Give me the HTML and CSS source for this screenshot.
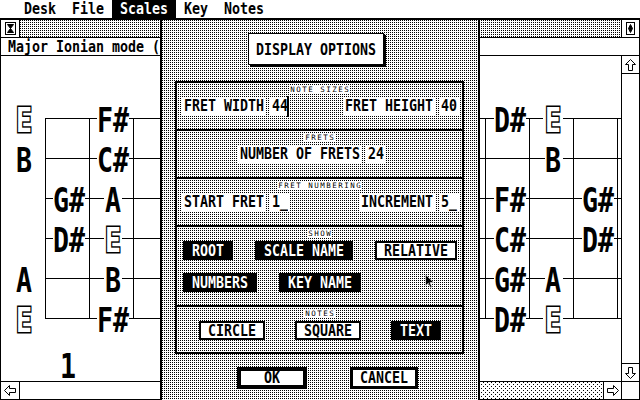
FILE: index.html
```html
<!DOCTYPE html>
<html>
<head>
<meta charset="utf-8">
<title>Display Options</title>
<link rel="stylesheet" href="styles.css">
</head>
<body>
<div class="screen">
  <div class="menubar">
    <div class="mi"><span class="t">Desk</span></div>
    <div class="mi"><span class="t">File</span></div>
    <div class="mi on"><span class="t">Scales</span></div>
    <div class="mi"><span class="t">Key</span></div>
    <div class="mi"><span class="t">Notes</span></div>
  </div>

  <section class="win win-left">
    <div class="titlebar">
      <div class="wbox closer">
        <svg width="11" height="13" viewBox="0 0 11 13"><rect x=".5" y=".5" width="10" height="12" fill="#fff" stroke="#000"/><path d="M2.5 2.5H8.5L5.5 6.5L8.5 10.5H2.5L5.5 6.5Z" fill="#000" stroke="#000"/></svg>
      </div>
      <div class="wtitle pat"></div>
    </div>
    <div class="info"><span class="t">Major Ionian mode (</span></div>
    <div class="body">
      <svg class="board" width="160" height="325" viewBox="1 56 160 325">
        <path class="grid" d="M45.5 118V319M89.5 118V319M133.5 118V319M45 118.5H161M45 158.5H161M45 198.5H161M45 238.5H161M45 278.5H161M45 318.5H161"/>
        <g class="bg">
          <rect x="53" y="186" width="32" height="26"/>
          <rect x="53" y="226" width="32" height="26"/>
          <rect x="97" y="106" width="32" height="26"/>
          <rect x="97" y="146" width="32" height="26"/>
          <rect x="104" y="186" width="18" height="26"/>
          <rect x="104" y="226" width="18" height="26"/>
          <rect x="104" y="266" width="18" height="26"/>
          <rect x="97" y="306" width="32" height="26"/>
        </g>
        <g transform="scale(1 1.25)">
          <text class="note hollow" x="24" y="105.6">E</text>
          <text class="note" x="24" y="137.6">B</text>
          <text class="note" x="24" y="233.6">A</text>
          <text class="note hollow" x="24" y="265.6">E</text>
          <text class="note" x="69" y="169.6">G#</text>
          <text class="note" x="69" y="201.6">D#</text>
          <text class="note" x="113" y="105.6">F#</text>
          <text class="note" x="113" y="137.6">C#</text>
          <text class="note" x="113" y="169.6">A</text>
          <text class="note hollow" x="113" y="201.6">E</text>
          <text class="note" x="113" y="233.6">B</text>
          <text class="note" x="113" y="265.6">F#</text>
          <text class="note" x="68" y="302.4">1</text>
        </g>
      </svg>
    </div>
    <div class="hbar">
      <div class="wbox larrow">
        <svg width="12" height="11" viewBox="0 0 12 11"><path d="M.5 5.5L5.5 .5V3.5H11.5V7.5H5.5V10.5Z" fill="#fff" stroke="#000"/></svg>
      </div>
      <div class="htrack"></div>
    </div>
  </section>

  <section class="win win-right">
    <div class="titlebar">
      <div class="wtitle pat"></div>
      <div class="wbox fuller">
        <svg width="9" height="13" viewBox="0 0 9 13"><rect x=".5" y=".5" width="8" height="12" fill="#fff" stroke="#000"/><path d="M4.5 2.5L6.5 6.5L4.5 10.5L2.5 6.5Z" fill="#000" stroke="#000"/></svg>
      </div>
    </div>
    <div class="info"></div>
    <div class="body">
      <svg class="board" width="142" height="325" viewBox="479 56 142 325">
        <path class="grid" d="M485.5 118V319M529.5 118V319M573.5 118V319M617.5 118V319M479 118.5H621M479 158.5H621M479 198.5H621M479 238.5H621M479 278.5H621M479 318.5H621"/>
        <g class="bg">
          <rect x="494" y="106" width="32" height="26"/>
          <rect x="543" y="106" width="20" height="26"/>
          <rect x="545" y="146" width="18" height="26"/>
          <rect x="494" y="186" width="32" height="26"/>
          <rect x="582" y="186" width="32" height="26"/>
          <rect x="494" y="226" width="32" height="26"/>
          <rect x="582" y="226" width="32" height="26"/>
          <rect x="494" y="266" width="32" height="26"/>
          <rect x="545" y="266" width="18" height="26"/>
          <rect x="494" y="306" width="32" height="26"/>
          <rect x="543" y="306" width="20" height="26"/>
        </g>
        <g transform="scale(1 1.25)">
          <text class="note" x="510" y="105.6">D#</text>
          <text class="note hollow" x="553" y="105.6">E</text>
          <text class="note" x="553" y="137.6">B</text>
          <text class="note" x="510" y="169.6">F#</text>
          <text class="note" x="598" y="169.6">G#</text>
          <text class="note" x="510" y="201.6">C#</text>
          <text class="note" x="598" y="201.6">D#</text>
          <text class="note" x="510" y="233.6">G#</text>
          <text class="note" x="553" y="233.6">A</text>
          <text class="note" x="510" y="265.6">D#</text>
          <text class="note hollow" x="553" y="265.6">E</text>
        </g>
      </svg>
      <div class="vbar">
        <div class="wbox up">
          <svg width="11" height="12" viewBox="0 0 11 12"><path d="M5.5 .5L10.5 5.5H7.5V11.5H3.5V5.5H.5Z" fill="#fff" stroke="#000"/></svg>
        </div>
        <div class="vtrack"></div>
        <div class="wbox down">
          <svg width="11" height="12" viewBox="0 0 11 12"><path d="M5.5 11.5L10.5 6.5H7.5V.5H3.5V6.5H.5Z" fill="#fff" stroke="#000"/></svg>
        </div>
      </div>
    </div>
    <div class="hbar">
      <div class="htrack sparse"></div>
      <div class="wbox rarrow">
        <svg width="12" height="11" viewBox="0 0 12 11"><path d="M11.5 5.5L6.5 .5V3.5H.5V7.5H6.5V10.5Z" fill="#fff" stroke="#000"/></svg>
      </div>
      <div class="wbox sizer"></div>
    </div>
  </section>

  <div class="dialog pat">
    <div class="dtitle"><span class="t">DISPLAY OPTIONS</span></div>
    <div class="frame">
      <div class="sec">
        <div class="lbl"><span>NOTE SIZES</span></div>
        <div class="row">
          <div class="fld"><div class="w"><span class="t">FRET WIDTH</span></div><div class="w caret"><span class="t">44</span></div></div>
          <div class="fld"><div class="w"><span class="t">FRET HEIGHT</span></div><div class="w"><span class="t">40</span></div></div>
        </div>
      </div>
      <div class="sec">
        <div class="lbl"><span>FRETS</span></div>
        <div class="row center">
          <div class="fld"><div class="w"><span class="t">NUMBER OF FRETS</span></div><div class="w"><span class="t">24</span></div></div>
        </div>
      </div>
      <div class="sec">
        <div class="lbl"><span>FRET NUMBERING</span></div>
        <div class="row">
          <div class="fld"><div class="w"><span class="t">START FRET</span></div><div class="w"><span class="t">1_</span></div></div>
          <div class="fld"><div class="w"><span class="t">INCREMENT</span></div><div class="w"><span class="t">5_</span></div></div>
        </div>
      </div>
      <div class="sec show">
        <div class="lbl"><span>SHOW</span></div>
        <div class="brow">
          <div class="btn sel"><span class="t">ROOT</span></div>
          <div class="btn sel"><span class="t">SCALE NAME</span></div>
          <div class="btn"><span class="t">RELATIVE</span></div>
        </div>
        <div class="brow">
          <div class="btn sel"><span class="t">NUMBERS</span></div>
          <div class="btn sel"><span class="t">KEY NAME</span></div>
        </div>
      </div>
      <div class="sec last">
        <div class="lbl"><span>NOTES</span></div>
        <div class="brow notes">
          <div class="btn"><span class="t">CIRCLE</span></div>
          <div class="btn"><span class="t">SQUARE</span></div>
          <div class="btn sel"><span class="t">TEXT</span></div>
        </div>
      </div>
    </div>
    <div class="exits">
      <div class="btn def"><span class="t">OK</span></div>
      <div class="btn exit"><span class="t">CANCEL</span></div>
    </div>
  </div>

  <svg class="mouse" width="10" height="15" viewBox="0 0 10 15"><path d="M.5 .5V12L3.3 9.3L5.3 13.8L7 13L5 8.6H8.8Z" fill="#000" stroke="#fff" stroke-width=".6"/></svg>
</div>
</body>
</html>
```

FILE: styles.css
```css
* { box-sizing: border-box; }

html, body {
  margin: 0;
  padding: 0;
  background: #fff;
}

.screen {
  position: relative;
  width: 640px;
  height: 400px;
  overflow: hidden;
  font-family: "DejaVu Sans Mono", monospace;
  color: #000;
  background: #fff;
}

/* Atari system font look: 8px cells, tall bold caps */
.t {
  display: block;
  font-weight: bold;
  font-size: 13.29px;
  line-height: 16px;
  white-space: pre;
  transform: scaleY(1.25);
}

.pat {
  background: conic-gradient(at 1px 1px, #fff 75%, #000 0) 0 0 / 2px 2px;
}

.sparse {
  background:
    conic-gradient(at 1px 1px, transparent 75%, #000 0) 0 0 / 4px 4px,
    conic-gradient(at 1px 1px, transparent 75%, #000 0) 2px 2px / 4px 4px,
    #fff;
}

/* menu bar */
.menubar {
  display: flex;
  height: 19px;
  border-bottom: 1px solid #000;
  padding-left: 16px;
}
.mi {
  height: 18px;
  padding: 0 8px;
  display: flex;
  align-items: center;
}
.mi.on { background: #000; color: #fff; }

/* windows */
.win {
  position: absolute;
  top: 19px;
  width: 162px;
  height: 381px;
  border: 1px solid #000;
  background: #fff;
  display: flex;
  flex-direction: column;
}
.win-left { left: 0; }
.win-right { left: 478px; }

.titlebar {
  display: flex;
  height: 18px;
  border-bottom: 1px solid #000;
  flex: none;
}
.wtitle { flex: 1; }

.wbox {
  width: 18px;
  flex: none;
  display: flex;
  align-items: center;
  justify-content: center;
  background: #fff;
}
.wbox svg { display: block; }
.closer { width: 19px; border-right: 1px solid #000; }
.fuller { border-left: 1px solid #000; }

.info {
  height: 18px;
  flex: none;
  border-bottom: 1px solid #000;
  padding: 1px 0 0 7px;
  overflow: hidden;
}

.body {
  flex: 1;
  display: flex;
  min-height: 0;
}
.board { display: block; flex: none; overflow: visible; }
.grid {
  stroke: #000;
  stroke-width: 1;
  fill: none;
  shape-rendering: crispEdges;
}
.bg rect { fill: #fff; }

.note {
  font-family: "DejaVu Sans Mono", monospace;
  font-weight: bold;
  font-size: 26.58px;
  fill: #000;
  text-anchor: middle;
}
.note.hollow {
  fill: #fff;
  stroke: #000;
  stroke-width: 2.4px;
  stroke-linejoin: miter;
  paint-order: stroke;
}

.vbar {
  width: 18px;
  flex: none;
  border-left: 1px solid #000;
  display: flex;
  flex-direction: column;
  background: #fff;
}
.vbar .wbox { width: auto; }
.up { height: 18px; border-bottom: 1px solid #000; }
.vtrack { flex: 1; }
.down { height: 18px; border-top: 1px solid #000; }

.hbar {
  height: 18px;
  flex: none;
  border-top: 1px solid #000;
  display: flex;
  background: #fff;
}
.larrow { width: 19px; border-right: 1px solid #000; }
.htrack { flex: 1; }
.rarrow, .sizer { border-left: 1px solid #000; }

/* dialog */
.dialog {
  position: absolute;
  left: 160px;
  top: 18px;
  width: 320px;
  height: 400px;
  border: 2px solid #000;
  padding: 13px 0 0 13px;
}

.dtitle {
  margin-left: 73px;
  width: 136px;
  height: 32px;
  border: 1px solid #000;
  background: #fff;
  box-shadow: 2px 2px 0 #000;
  display: flex;
  justify-content: center;
  padding-top: 9px;
}

.frame {
  margin-top: 16px;
  width: 289px;
  height: 273px;
  border: 1px solid #000;
}

.sec {
  height: 48px;
  border: 1px solid #000;
  padding-top: 3px;
}
.sec.show { height: 80px; }
.sec.last { height: 47px; }

.lbl {
  display: flex;
  justify-content: center;
  height: 8px;
}
.lbl span {
  background: #fff;
  font-size: 7.5px;
  line-height: 8px;
  letter-spacing: 1.5px;
  padding-left: 1.5px;
}

.row {
  display: flex;
  justify-content: space-between;
  margin-top: 3px;
  height: 19px;
  padding: 0 3px 0 5px;
}
.row.center {
  justify-content: flex-start;
  padding-left: 61px;
}
.fld { display: flex; gap: 4px; }
.w {
  position: relative;
  display: flex;
  height: 19px;
  padding: 1px 2px 2px;
  background: #fff;
}
.w.caret::after {
  content: "";
  position: absolute;
  right: 1px;
  top: -1px;
  width: 2px;
  height: 21px;
  background: #000;
}

.brow {
  display: flex;
  gap: 22px;
  padding-left: 6px;
  margin-top: 3px;
}
.brow + .brow { margin-top: 13px; }
.brow.notes { gap: 30px; padding-left: 22px; }

.btn {
  height: 19px;
  border: 2px solid #000;
  background: #fff;
  padding: 0 7px;
  display: flex;
  align-items: center;
}
.btn.sel { background: #000; color: #fff; }

.exits {
  display: flex;
  gap: 43px;
  margin: 13px 0 0 62px;
}
.btn.def { height: 22px; border-width: 4px; padding: 0 23px; }
.btn.exit { height: 22px; border-width: 3px; padding: 0 7px; }

.mouse {
  position: absolute;
  left: 425px;
  top: 274px;
}
```
